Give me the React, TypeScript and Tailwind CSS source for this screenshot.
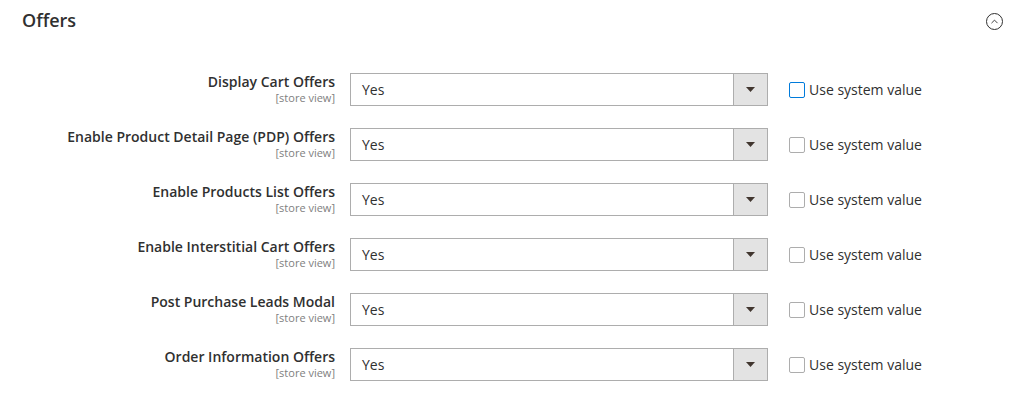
import { ChevronUp } from 'lucide-react';

const rows = [
    { label: 'Display Cart Offers', focused: true },
    { label: 'Enable Product Detail Page (PDP) Offers' },
    { label: 'Enable Products List Offers' },
    { label: 'Enable Interstitial Cart Offers' },
    { label: 'Post Purchase Leads Modal' },
    { label: 'Order Information Offers' },
];

const ConfigRow = ({ label, focused }: { label: string; focused?: boolean }) => (
    <div className="flex items-start">
        <div className="w-[335px] shrink-0 text-right">
            <div className="text-[14px] leading-[18px] font-semibold text-[#303030]">{label}</div>
            <div className="text-[11px] leading-[11px] text-[#808080] mt-[1px]">[store view]</div>
        </div>

        <div className="ml-[15px] w-[418px] h-[33px] flex border border-[#adadad] bg-white">
            <div className="flex-1 flex items-center pl-[11px] text-[14px] text-[#303030]">Yes</div>
            <div className="w-[34px] flex items-center justify-center bg-[#e3e3e3] border-l border-[#adadad]">
                <svg width="9" height="5" viewBox="0 0 9 5">
                    <path d="M0 0 H9 L4.5 5 Z" fill="#41362f" />
                </svg>
            </div>
        </div>

        <label className="ml-[21px] h-[33px] flex items-center gap-[4px] text-[14px] text-[#303030]">
            <span
                className={
                    focused
                        ? 'w-[16px] h-[16px] rounded-[2px] border border-[#007bdb] bg-white'
                        : 'w-[16px] h-[16px] rounded-[2px] border border-[#adadad] bg-white'
                }
            />
            Use system value
        </label>
    </div>
);

const App = () => {
    return (
        <div
            className="w-[1018px] h-[402px] bg-white overflow-hidden"
            style={{ fontFamily: '"Open Sans", "Noto Sans", sans-serif' }}
        >
            <div className="flex items-center justify-between pl-[22px] pr-[15px] h-[41px]">
                <h2 className="text-[18px] font-semibold text-[#303030]">Offers</h2>
                <span className="w-[17px] h-[17px] rounded-full border border-[#303030] flex items-center justify-center mt-[2px]">
                    <ChevronUp className="w-[11px] h-[11px] text-[#303030]" strokeWidth={2} />
                </span>
            </div>

            <div className="flex flex-col gap-[22px] mt-[32px]">
                {rows.map((r) => (
                    <ConfigRow key={r.label} label={r.label} focused={r.focused} />
                ))}
            </div>
        </div>
    );
};

export default App;
